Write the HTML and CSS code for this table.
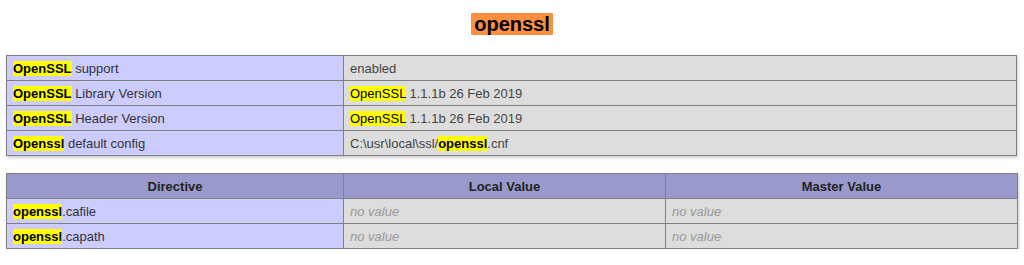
FILE: index.html
```html
<!DOCTYPE html>
<html>
<head>
<meta charset="utf-8">
<link rel="stylesheet" href="styles.css">
</head>
<body>
<h2 class="title"><span class="title-text">openssl</span></h2>
<table class="info">
  <colgroup><col class="c-e"><col class="c-v"></colgroup>
  <tr><td class="e"><mark class="hl b">OpenSSL</mark> support</td><td class="v">enabled</td></tr>
  <tr><td class="e"><mark class="hl b">OpenSSL</mark> Library Version</td><td class="v"><mark class="hl">OpenSSL</mark> 1.1.1b 26 Feb 2019</td></tr>
  <tr><td class="e"><mark class="hl b">OpenSSL</mark> Header Version</td><td class="v"><mark class="hl">OpenSSL</mark> 1.1.1b 26 Feb 2019</td></tr>
  <tr><td class="e"><mark class="hl b">Openssl</mark> default config</td><td class="v">C:\usr\local\ssl/<mark class="hl b">openssl</mark>.cnf</td></tr>
</table>
<table class="info second">
  <colgroup><col class="c-e"><col class="c-l"><col class="c-m"></colgroup>
  <tr class="h"><th>Directive</th><th>Local Value</th><th>Master Value</th></tr>
  <tr><td class="e"><mark class="hl b">openssl</mark>.cafile</td><td class="v"><i>no value</i></td><td class="v"><i>no value</i></td></tr>
  <tr><td class="e"><mark class="hl b">openssl</mark>.capath</td><td class="v"><i>no value</i></td><td class="v"><i>no value</i></td></tr>
</table>
</body>
</html>
```
FILE: styles.css
```css
html, body {
  margin: 0;
  padding: 0;
  background: #fff;
  font-family: "Liberation Sans", Arial, sans-serif;
  color: #222;
}
.title {
  margin: 13px 0 0 0;
  text-align: center;
  font-size: 20px;
  line-height: 22px;
  height: 22px;
  font-weight: bold;
}
.title-text {
  display: inline-block;
  background: #fd8f3f;
  color: #000;
  padding: 0 3px;
  line-height: 22px;
}
.info {
  border-collapse: collapse;
  margin: 20px 0 0 6px;
  width: 1011px;
  table-layout: fixed;
  box-shadow: 1px 2px 3px #ccc;
  font-size: 13px;
}
.second {
  margin-top: 17px;
}
.c-e { width: 337px; }
.c-l { width: 322px; }
.c-m { width: 352px; }
td, th {
  border: 1px solid #808080;
  height: 24px;
  padding: 0 0 0 6px;
  vertical-align: middle;
  white-space: nowrap;
}
.e {
  background: #ccccff;
  color: #333;
}
.v {
  background: #dddddd;
  color: #444;
}
.v i {
  color: #999;
}
.h th {
  background: #9999cc;
  color: #222;
  font-weight: bold;
  text-align: center;
  padding: 0;
}
.hl {
  background: #ffff00;
  color: #000;
}
.b {
  font-weight: bold;
}
```
